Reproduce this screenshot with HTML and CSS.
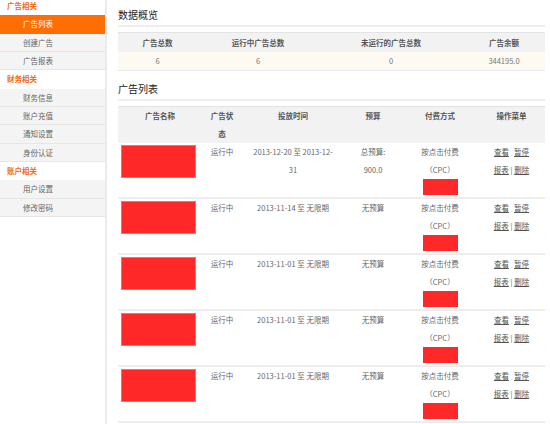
FILE: index.html
```html
<!DOCTYPE html>
<html lang="zh-CN">
<head>
<meta charset="utf-8">
<title>广告列表</title>
<link rel="stylesheet" href="styles.css">
</head>
<body>
<div class="page">
  <aside class="sidebar">
    <nav class="nav">
      <div class="group-title">广告相关</div>
      <a class="nav-item active" href="#">广告列表</a>
      <a class="nav-item" href="#">创建广告</a>
      <a class="nav-item" href="#">广告报表</a>
      <div class="group-title">财务相关</div>
      <a class="nav-item" href="#">财务信息</a>
      <a class="nav-item" href="#">账户充值</a>
      <a class="nav-item" href="#">通知设置</a>
      <a class="nav-item" href="#">身份认证</a>
      <div class="group-title">账户相关</div>
      <a class="nav-item" href="#">用户设置</a>
      <a class="nav-item" href="#">修改密码</a>
    </nav>
  </aside>
  <main class="main">
    <h2 class="section-title">数据概览</h2>
    <table class="overview">
      <colgroup>
        <col class="ov-c1"><col class="ov-c2"><col class="ov-c3"><col class="ov-c4">
      </colgroup>
      <thead>
        <tr><th>广告总数</th><th>运行中广告总数</th><th>未运行的广告总数</th><th>广告余额</th></tr>
      </thead>
      <tbody>
        <tr><td>6</td><td>6</td><td>0</td><td>344195.0</td></tr>
      </tbody>
    </table>

    <h2 class="section-title second">广告列表</h2>
    <table class="ad-list">
      <colgroup>
        <col class="c-name"><col class="c-state"><col class="c-time"><col class="c-budget"><col class="c-pay"><col class="c-ops">
      </colgroup>
      <thead>
        <tr><th>广告名称</th><th>广告状态</th><th>投放时间</th><th>预算</th><th>付费方式</th><th>操作菜单</th></tr>
      </thead>
      <tbody>
        <tr>
          <td class="name"><div class="thumb"></div></td>
          <td>运行中</td>
          <td class="time">2013-12-20 至 2013-12-31</td>
          <td>总预算:<br>900.0</td>
          <td>按点击付费<br>（CPC）<div class="tag"></div></td>
          <td class="ops"><div><a href="#">查看</a>&nbsp;&nbsp; <a href="#">暂停</a></div><div><a href="#">报表</a> | <a href="#">删除</a></div></td>
        </tr>
        <tr>
          <td class="name"><div class="thumb"></div></td>
          <td>运行中</td>
          <td class="time">2013-11-14 至 无限期</td>
          <td>无预算</td>
          <td>按点击付费<br>（CPC）<div class="tag"></div></td>
          <td class="ops"><div><a href="#">查看</a>&nbsp;&nbsp; <a href="#">暂停</a></div><div><a href="#">报表</a> | <a href="#">删除</a></div></td>
        </tr>
        <tr>
          <td class="name"><div class="thumb"></div></td>
          <td>运行中</td>
          <td class="time">2013-11-01 至 无限期</td>
          <td>无预算</td>
          <td>按点击付费<br>（CPC）<div class="tag"></div></td>
          <td class="ops"><div><a href="#">查看</a>&nbsp;&nbsp; <a href="#">暂停</a></div><div><a href="#">报表</a> | <a href="#">删除</a></div></td>
        </tr>
        <tr>
          <td class="name"><div class="thumb"></div></td>
          <td>运行中</td>
          <td class="time">2013-11-01 至 无限期</td>
          <td>无预算</td>
          <td>按点击付费<br>（CPC）<div class="tag"></div></td>
          <td class="ops"><div><a href="#">查看</a>&nbsp;&nbsp; <a href="#">暂停</a></div><div><a href="#">报表</a> | <a href="#">删除</a></div></td>
        </tr>
        <tr>
          <td class="name"><div class="thumb"></div></td>
          <td>运行中</td>
          <td class="time">2013-11-01 至 无限期</td>
          <td>无预算</td>
          <td>按点击付费<br>（CPC）<div class="tag"></div></td>
          <td class="ops"><div><a href="#">查看</a>&nbsp;&nbsp; <a href="#">暂停</a></div><div><a href="#">报表</a> | <a href="#">删除</a></div></td>
        </tr>
      </tbody>
    </table>
  </main>
</div>
</body>
</html>
```

FILE: styles.css
```css
html, body {
  margin: 0;
  height: 100%;
}

body {
  font-family: "Noto Sans CJK SC", "Noto Sans", sans-serif;
  font-size: 7.5px;
  color: #666;
  background: #fff;
  overflow: hidden;
}

.page {
  display: flex;
  height: 100%;
}

/* Sidebar */
.sidebar {
  flex: none;
  width: 105px;
  border-right: 2px solid #ebebeb;
}

.nav {
  margin-top: -3px;
}

.group-title {
  height: 18.33px;
  line-height: 18px;
  padding-left: 7px;
  color: #f56a0f;
  font-weight: bold;
  background: #fff;
}

.nav-item {
  display: block;
  height: 17.33px;
  line-height: 17px;
  padding-left: 23px;
  background: #f4f4f4;
  border-bottom: 1px solid #e6e6e6;
  color: #666;
  text-decoration: none;
}

.nav-item.active {
  background: #ff6d05;
  border-bottom-color: #ff6d05;
  color: #fff;
}

/* Main */
.main {
  flex: 1;
  min-width: 0;
  padding: 0 5px 0 11px;
}

.section-title {
  margin: 0;
  padding-top: 5px;
  height: 20px;
  line-height: 20px;
  font-size: 10px;
  font-weight: normal;
  color: #222;
  border-bottom: 2px solid #eeeeee;
}

.section-title.second {
  margin-top: 3px;
}

/* Overview */
.overview {
  width: 100%;
  margin-top: 5px;
  border-collapse: collapse;
  table-layout: fixed;
}

.ov-c1 { width: 79px; }
.ov-c2 { width: 122px; }
.ov-c3 { width: 144px; }
.ov-c4 { width: 82px; }

.overview th {
  height: 19px;
  padding: 0;
  line-height: 18px;
  background: #f2f2f2;
  border-top: 1px solid #e3e3e3;
  color: #555;
  font-weight: bold;
}

.overview td {
  height: 18px;
  padding: 0;
  line-height: 18px;
  text-align: center;
  background: #fcfaf1;
  border-bottom: 1px solid #e9e9e9;
  color: #777;
}

/* Ad list */
.ad-list {
  width: 100%;
  margin-top: 5px;
  border-collapse: collapse;
  table-layout: fixed;
}

.c-name { width: 84px; }
.c-state { width: 40px; }
.c-time { width: 102px; }
.c-budget { width: 58px; }
.c-pay { width: 76px; }
.c-ops { width: 67px; }

.ad-list th {
  padding: 0 6px;
  line-height: 18px;
  vertical-align: top;
  background: #f2f2f2;
  border-top: 1px solid #e2e2e2;
  color: #555;
  font-weight: bold;
}

.ad-list td {
  padding: 0 6px 2px;
  line-height: 18px;
  vertical-align: top;
  text-align: center;
  border-bottom: 2px solid #ededed;
  color: #666;
}

.ad-list td.time {
  padding-left: 9px;
  padding-right: 9px;
}

.ad-list td.name {
  padding: 2px 3px;
  text-align: left;
}

.thumb {
  width: 73px;
  height: 31px;
  background: #ff2828;
  border: 1px solid #ff6a6a;
}

.tag {
  width: 35px;
  height: 16px;
  margin: 0 auto;
  background: #ff2828;
}

.ops a {
  color: #555;
  text-decoration: underline;
}
```
